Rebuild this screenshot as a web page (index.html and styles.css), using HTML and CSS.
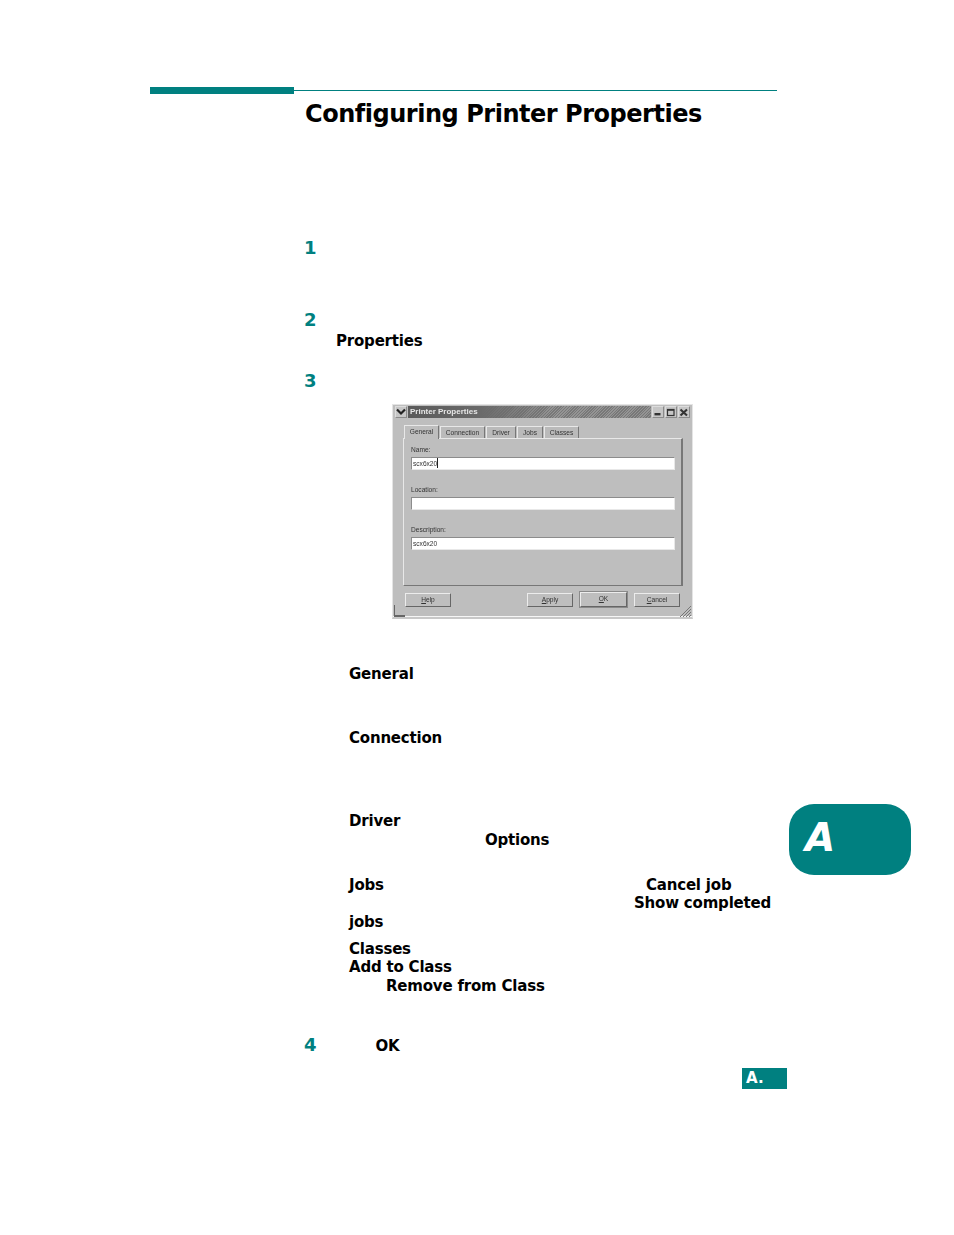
FILE: index.html
```html
<!DOCTYPE html>
<html lang="en">
<head>
    <meta charset="UTF-8">
    <title>Configuring Printer Properties</title>
    <link rel="stylesheet" href="styles.css">
</head>
<body>
    <div class="page">
        <div class="rule">
            <div class="rule-bar"></div>
            <div class="rule-line"></div>
        </div>

        <div class="content">
            <h1>Configuring Printer Properties</h1>

            <div class="step step-1">1</div>
            <div class="step step-2">2</div>
            <div class="line line-properties">Properties</div>
            <div class="step step-3">3</div>

            <div class="window">
                <div class="titlebar">
                    <div class="win-btn win-menu">
                        <svg width="10" height="8" viewBox="0 0 10 8"><path d="M1 1.5 L5 5.5 L9 1.5" fill="none" stroke="#222" stroke-width="2.2"/></svg>
                    </div>
                    <div class="win-title">Printer Properties</div>
                    <div class="win-btn">
                        <svg width="10" height="8" viewBox="0 0 10 8"><rect x="1.5" y="5" width="6" height="2.4" fill="#333"/></svg>
                    </div>
                    <div class="win-btn">
                        <svg width="10" height="9" viewBox="0 0 10 9"><rect x="1.5" y="1.5" width="6.5" height="6" fill="none" stroke="#333" stroke-width="1.2"/><rect x="1.5" y="1" width="6.5" height="1.8" fill="#333"/></svg>
                    </div>
                    <div class="win-btn">
                        <svg width="10" height="9" viewBox="0 0 10 9"><path d="M1.5 1.5 L8 7.5 M8 1.5 L1.5 7.5" stroke="#333" stroke-width="2.1"/></svg>
                    </div>
                </div>

                <div class="tabs">
                    <div class="tab tab-active tab-general">General</div>
                    <div class="tab tab-connection">Connection</div>
                    <div class="tab tab-driver">Driver</div>
                    <div class="tab tab-jobs">Jobs</div>
                    <div class="tab tab-classes">Classes</div>
                </div>

                <div class="panel">
                    <div class="field">
                        <div class="field-label">Name:</div>
                        <div class="field-input">scx6x20<span class="caret"></span></div>
                    </div>
                    <div class="field">
                        <div class="field-label">Location:</div>
                        <div class="field-input"></div>
                    </div>
                    <div class="field">
                        <div class="field-label">Description:</div>
                        <div class="field-input">scx6x20</div>
                    </div>
                </div>

                <div class="buttons">
                    <div class="btn"><u>H</u>elp</div>
                    <div class="btn-gap"></div>
                    <div class="btn"><u>A</u>pply</div>
                    <div class="btn btn-default"><u>O</u>K</div>
                    <div class="btn"><u>C</u>ancel</div>
                </div>

                <div class="grip grip-left"></div>
                <svg class="grip-right" width="12" height="12" viewBox="0 0 12 12">
                    <path d="M1 12 L12 1 M4 12 L12 4 M7 12 L12 7 M10 12 L12 10" stroke="#777" stroke-width="1"/>
                </svg>
            </div>

            <div class="notes">
                <div class="line line-general">General</div>
                <div class="line line-connection">Connection</div>
                <div class="line line-driver">Driver</div>
                <div class="line line-options">Options</div>
                <div class="line line-jobs">Jobs<span class="cancel-job">Cancel job</span></div>
                <div class="line line-show">Show completed</div>
                <div class="line line-jobs-word">jobs</div>
                <div class="line line-classes">Classes</div>
                <div class="line">Add to Class</div>
                <div class="line line-remove">Remove from Class</div>
            </div>

            <div class="last-step">
                <div class="step">4</div>
                <div class="line last-ok">OK</div>
            </div>
        </div>

        <div class="footer-tag">A.</div>
        <div class="side-tab">A</div>
    </div>
</body>
</html>
```

FILE: styles.css
```css
* {
    box-sizing: border-box;
}

body {
    margin: 0;
    background: #fff;
    color: #000;
    font-family: "DejaVu Sans", Verdana, sans-serif;
}

.page {
    position: relative;
    width: 954px;
    height: 1235px;
    padding-top: 87px;
    overflow: hidden;
}

.rule {
    display: flex;
    align-items: center;
    margin-left: 150px;
    width: 627px;
}

.rule-bar {
    width: 144px;
    height: 7px;
    background: #008080;
}

.rule-line {
    flex: 1;
    height: 1px;
    background: #008080;
}

.content {
    padding-left: 305px;
}

h1 {
    margin: 5px 0 0;
    font-size: 24px;
    line-height: 30px;
    font-weight: bold;
    letter-spacing: -0.47px;
}

.step {
    margin-left: -1px;
    color: #008080;
    font-size: 18px;
    font-weight: bold;
    line-height: 22px;
}

.step-1 {
    margin-top: 108px;
}

.step-2 {
    margin-top: 50px;
}

.step-3 {
    margin-top: 20px;
}

.line {
    font-size: 15px;
    font-weight: bold;
    line-height: 18px;
    letter-spacing: -0.2px;
}

.line-properties {
    margin-top: 1px;
    padding-left: 31px;
}

/* screenshot of the dialog, slightly soft like the scan */
.window {
    position: relative;
    width: 301px;
    height: 215px;
    margin: 12px 0 0 87px;
    padding: 1px 2px 0 2px;
    background: #bebebe;
    border: 1px solid #e4e4e4;
    border-bottom: 2px solid #c8c8c8;
    box-shadow: inset 0 -1px 0 #f6f6f6;
    font-family: "Liberation Sans", Arial, sans-serif;
    font-size: 6.6px;
    color: #333;
    filter: blur(0.45px);
}

.titlebar {
    display: flex;
    height: 12px;
    gap: 1px;
}

.win-btn {
    display: flex;
    align-items: center;
    justify-content: center;
    width: 12px;
    background: #c6c6c6;
    border: 1px solid #dcdcdc;
    border-right-color: #8a8a8a;
    border-bottom-color: #8a8a8a;
}

.win-title {
    flex: 1;
    padding-left: 2px;
    background:
        linear-gradient(90deg, #5a5a5a 0, #6a6a6a 30%, rgba(120, 120, 120, 0) 60%),
        repeating-linear-gradient(135deg, #787878 0 1px, #949494 1px 2px);
    color: #e6e6e6;
    font-size: 8px;
    font-weight: bold;
    line-height: 12px;
}

.tabs {
    display: flex;
    align-items: flex-end;
    height: 20px;
    margin-left: 9px;
    gap: 1px;
}

.tab {
    height: 12px;
    text-align: center;
    line-height: 11px;
    background: #bababa;
    border: 1px solid #e8e8e8;
    border-right-color: #777;
    border-bottom: none;
}

.tab-active {
    position: relative;
    height: 14px;
    margin-bottom: -1px;
    background: #bebebe;
    line-height: 11px;
    z-index: 1;
}

.tab-general {
    width: 35px;
}

.tab-connection {
    width: 45px;
}

.tab-driver {
    width: 30px;
}

.tab-jobs {
    width: 26px;
}

.tab-classes {
    width: 35px;
}

.panel {
    height: 148px;
    margin-left: 8px;
    width: 280px;
    padding: 5px 6px 0 7px;
    border: 1px solid #e8e8e8;
    border-right-color: #777;
    border-bottom-color: #777;
    border-right-width: 2px;
}

.field {
    height: 40px;
}

.field-label {
    height: 13px;
    line-height: 11px;
}

.field-input {
    height: 13px;
    padding-left: 1px;
    background: #fff;
    border: 1px solid #8c8c8c;
    border-right-color: #e8e8e8;
    border-bottom-color: #e8e8e8;
    line-height: 11px;
}

.caret {
    display: inline-block;
    width: 1px;
    height: 10px;
    background: #222;
    vertical-align: top;
}

.buttons {
    display: flex;
    align-items: center;
    height: 17px;
    margin: 5px 0 0 10px;
    width: 277px;
}

.btn {
    width: 46px;
    height: 14px;
    margin-right: 7px;
    text-align: center;
    line-height: 12px;
    background: #bebebe;
    border: 1px solid #ececec;
    border-right-color: #666;
    border-bottom-color: #666;
}

.btn:last-child {
    margin-right: 0;
}

.btn-gap {
    width: 69px;
}

.btn-default {
    width: 47px;
    height: 15px;
    outline: 1px solid #8a8a8a;
}

.grip {
    position: absolute;
}

.grip-left {
    left: 1px;
    bottom: 0;
    width: 11px;
    height: 12px;
    border-left: 1px solid #666;
    border-bottom: 2px solid #666;
}

.grip-right {
    position: absolute;
    right: 1px;
    bottom: 0;
}

.notes {
    padding-left: 44px;
}

.line-general {
    margin-top: 46px;
}

.line-connection {
    margin-top: 46px;
}

.line-driver {
    margin-top: 65px;
}

.line-options {
    margin-top: 1px;
    padding-left: 136px;
}

.line-jobs {
    position: relative;
    margin-top: 27px;
}

.cancel-job {
    position: absolute;
    left: 297px;
    top: 0;
}

.line-show {
    padding-left: 285px;
}

.line-jobs-word {
    margin-top: 1px;
}

.line-classes {
    margin-top: 9px;
}

.line-remove {
    margin-top: 1px;
    padding-left: 37px;
}

.last-step {
    display: flex;
    align-items: center;
    margin-top: 39px;
}

.last-ok {
    margin-left: 59px;
    padding-top: 2px;
}

.footer-tag {
    position: absolute;
    left: 742px;
    top: 1068px;
    width: 45px;
    height: 21px;
    padding-left: 4px;
    background: #008080;
    color: #fff;
    font-size: 15px;
    font-weight: bold;
    line-height: 21px;
}

.side-tab {
    position: absolute;
    left: 789px;
    top: 804px;
    width: 122px;
    height: 71px;
    padding-left: 16px;
    background: #008080;
    border-radius: 25px;
    color: #fff;
    font-size: 39px;
    font-style: italic;
    font-weight: bold;
    line-height: 68px;
}
```
